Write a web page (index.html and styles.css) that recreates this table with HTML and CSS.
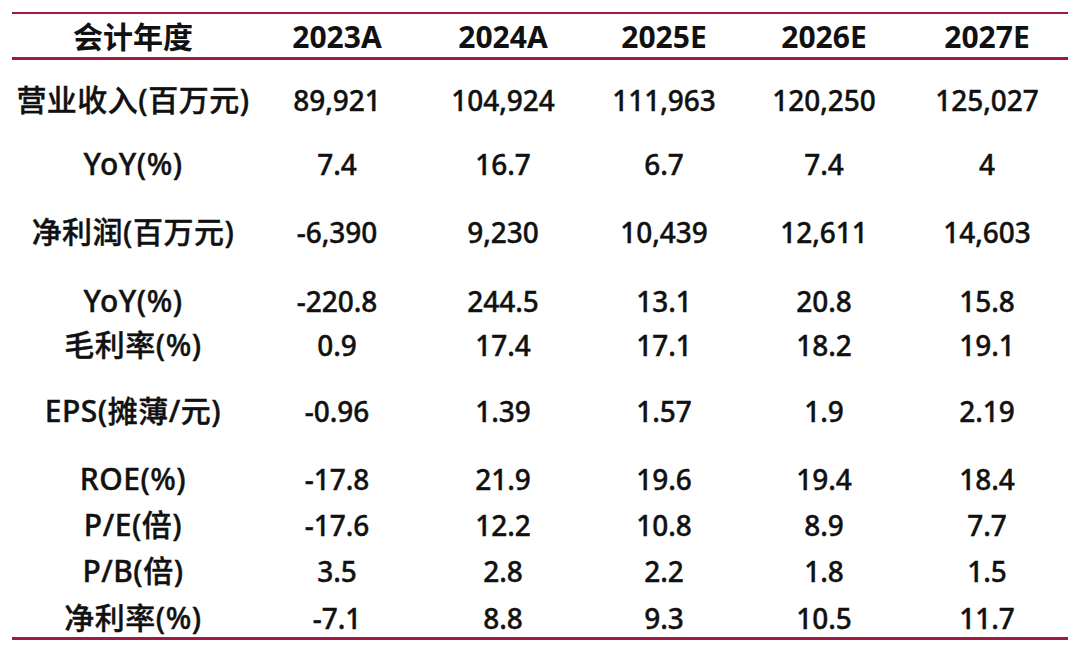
FILE: index.html
```html
<!DOCTYPE html>
<html lang="zh-CN">
<head>
<meta charset="utf-8">
<title>盈利预测</title>
<link rel="stylesheet" href="styles.css">
</head>
<body>
<div class="table">
  <div class="row head">
    <div class="cell label">会计年度</div>
    <div class="cell">2023A</div>
    <div class="cell">2024A</div>
    <div class="cell">2025E</div>
    <div class="cell">2026E</div>
    <div class="cell">2027E</div>
  </div>
  <div class="body">
    <div class="row r1">
      <div class="cell label">营业收入(百万元)</div>
      <div class="cell">89,921</div>
      <div class="cell">104,924</div>
      <div class="cell">111,963</div>
      <div class="cell">120,250</div>
      <div class="cell">125,027</div>
    </div>
    <div class="row r2">
      <div class="cell label">YoY(%)</div>
      <div class="cell">7.4</div>
      <div class="cell">16.7</div>
      <div class="cell">6.7</div>
      <div class="cell">7.4</div>
      <div class="cell">4</div>
    </div>
    <div class="row r3">
      <div class="cell label">净利润(百万元)</div>
      <div class="cell">-6,390</div>
      <div class="cell">9,230</div>
      <div class="cell">10,439</div>
      <div class="cell">12,611</div>
      <div class="cell">14,603</div>
    </div>
    <div class="row r4">
      <div class="cell label">YoY(%)</div>
      <div class="cell">-220.8</div>
      <div class="cell">244.5</div>
      <div class="cell">13.1</div>
      <div class="cell">20.8</div>
      <div class="cell">15.8</div>
    </div>
    <div class="row r5">
      <div class="cell label">毛利率(%)</div>
      <div class="cell">0.9</div>
      <div class="cell">17.4</div>
      <div class="cell">17.1</div>
      <div class="cell">18.2</div>
      <div class="cell">19.1</div>
    </div>
    <div class="row r6">
      <div class="cell label">EPS(摊薄/元)</div>
      <div class="cell">-0.96</div>
      <div class="cell">1.39</div>
      <div class="cell">1.57</div>
      <div class="cell">1.9</div>
      <div class="cell">2.19</div>
    </div>
    <div class="row r7">
      <div class="cell label">ROE(%)</div>
      <div class="cell">-17.8</div>
      <div class="cell">21.9</div>
      <div class="cell">19.6</div>
      <div class="cell">19.4</div>
      <div class="cell">18.4</div>
    </div>
    <div class="row r8">
      <div class="cell label">P/E(倍)</div>
      <div class="cell">-17.6</div>
      <div class="cell">12.2</div>
      <div class="cell">10.8</div>
      <div class="cell">8.9</div>
      <div class="cell">7.7</div>
    </div>
    <div class="row r9">
      <div class="cell label">P/B(倍)</div>
      <div class="cell">3.5</div>
      <div class="cell">2.8</div>
      <div class="cell">2.2</div>
      <div class="cell">1.8</div>
      <div class="cell">1.5</div>
    </div>
    <div class="row r10">
      <div class="cell label">净利率(%)</div>
      <div class="cell">-7.1</div>
      <div class="cell">8.8</div>
      <div class="cell">9.3</div>
      <div class="cell">10.5</div>
      <div class="cell">11.7</div>
    </div>
  </div>
</div>
</body>
</html>
```

FILE: styles.css
```css
html, body {
  margin: 0;
  padding: 0;
  background: #ffffff;
}

body {
  font-family: "Noto Sans", "Noto Sans CJK SC", sans-serif;
  color: #111111;
}

.table {
  margin: 12px 12px 0 12px;
  width: 1056px;
  border-top: 2px solid #a21a42;
}

.row {
  display: grid;
  grid-template-columns: 242px 166px 166px 156px 164px 162px;
  height: 38px;
  line-height: 38px;
  font-size: 28px;
  font-weight: 500;
}

.cell {
  text-align: center;
  white-space: nowrap;
}

.body .cell {
  -webkit-text-stroke: 0.4px #111111;
}

.body .label {
  font-size: 30px;
  letter-spacing: 0.5px;
}

.head {
  font-size: 30px;
  font-weight: 700;
  padding-top: 4px;
  padding-bottom: 1px;
  border-bottom: 3px solid #a21a42;
}

.body {
  display: flex;
  flex-direction: column;
  border-bottom: 3px solid #a21a42;
}

.r1 { margin-top: 21px; }
.r2 { margin-top: 26px; }
.r3 { margin-top: 30px; }
.r4 { margin-top: 31px; }
.r5 { margin-top: 6px; }
.r6 { margin-top: 28px; }
.r7 { margin-top: 30px; }
.r8 { margin-top: 8px; }
.r9 { margin-top: 8px; }
.r10 { margin-top: 9px; }
```
